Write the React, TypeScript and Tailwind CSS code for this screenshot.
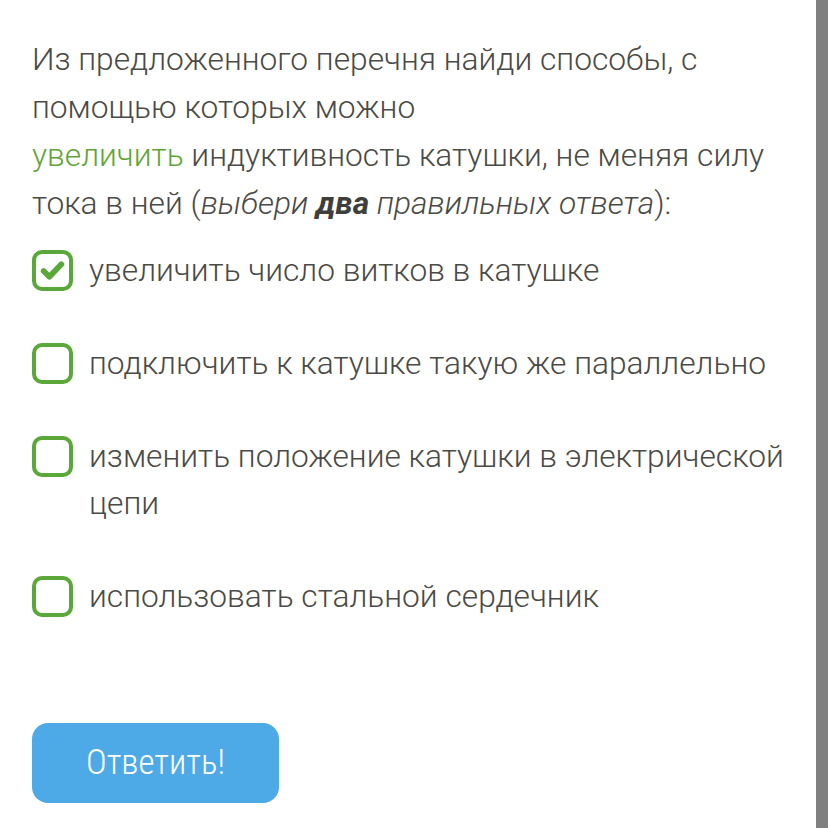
import React from "react";

const options = [
  { text: "увеличить число витков в катушке", checked: true },
  { text: "подключить к катушке такую же параллельно", checked: false },
  { text: "изменить положение катушки в электрической цепи", checked: false },
  { text: "использовать стальной сердечник", checked: false },
];

function Box({ checked }: { checked: boolean }) {
  return (
    <div className="mt-[3px] flex h-[41px] w-[41px] shrink-0 items-center justify-center rounded-[10px] border-[4px] border-[#5aa83a] bg-white">
      {checked && (
        <svg width="25" height="25" viewBox="0 0 24 24">
          <path d="M3.5 12.5 L9 18 L20.5 6" fill="none" stroke="#5aa83a" strokeWidth="5.5" strokeLinecap="round" strokeLinejoin="round" />
        </svg>
      )}
    </div>
  );
}

export default function App() {
  return (
    <div className="flex min-h-screen w-full bg-white" style={{ fontFamily: "Roboto, 'Liberation Sans', sans-serif" }}>
      <div className="flex w-[816px] flex-col pl-[32px] pr-[28px] pt-[36px]">
        <p className="text-[31.7px] font-light leading-[48px] text-[#4a4a46]">
          Из предложенного перечня найди способы, с помощью которых можно
          <br />
          <span className="text-[#5fa536]">увеличить</span> индуктивность катушки, не меняя силу тока в ней (
          <i>выбери <b className="font-bold text-[#3e3e3a]">два</b> правильных ответа</i>):
        </p>
        <div className="mt-[19px] flex flex-col gap-[46px]">
          {options.map((o, i) => (
            <div key={i} className="flex items-start gap-[16px]">
              <Box checked={o.checked} />
              <span className="text-[31.7px] font-light leading-[47px] text-[#4a4a46]">{o.text}</span>
            </div>
          ))}
        </div>
        <div className="mt-[103px]">
          <button
            className="flex h-[80px] w-[247px] items-center justify-center rounded-[16px] bg-[#4eaae6] text-[35px] font-light text-white"
            style={{ fontFamily: "'Roboto Condensed', Roboto, sans-serif" }}
          >
            Ответить!
          </button>
        </div>
      </div>
      <div className="w-[12px] shrink-0 self-stretch bg-[#808080]" />
    </div>
  );
}
